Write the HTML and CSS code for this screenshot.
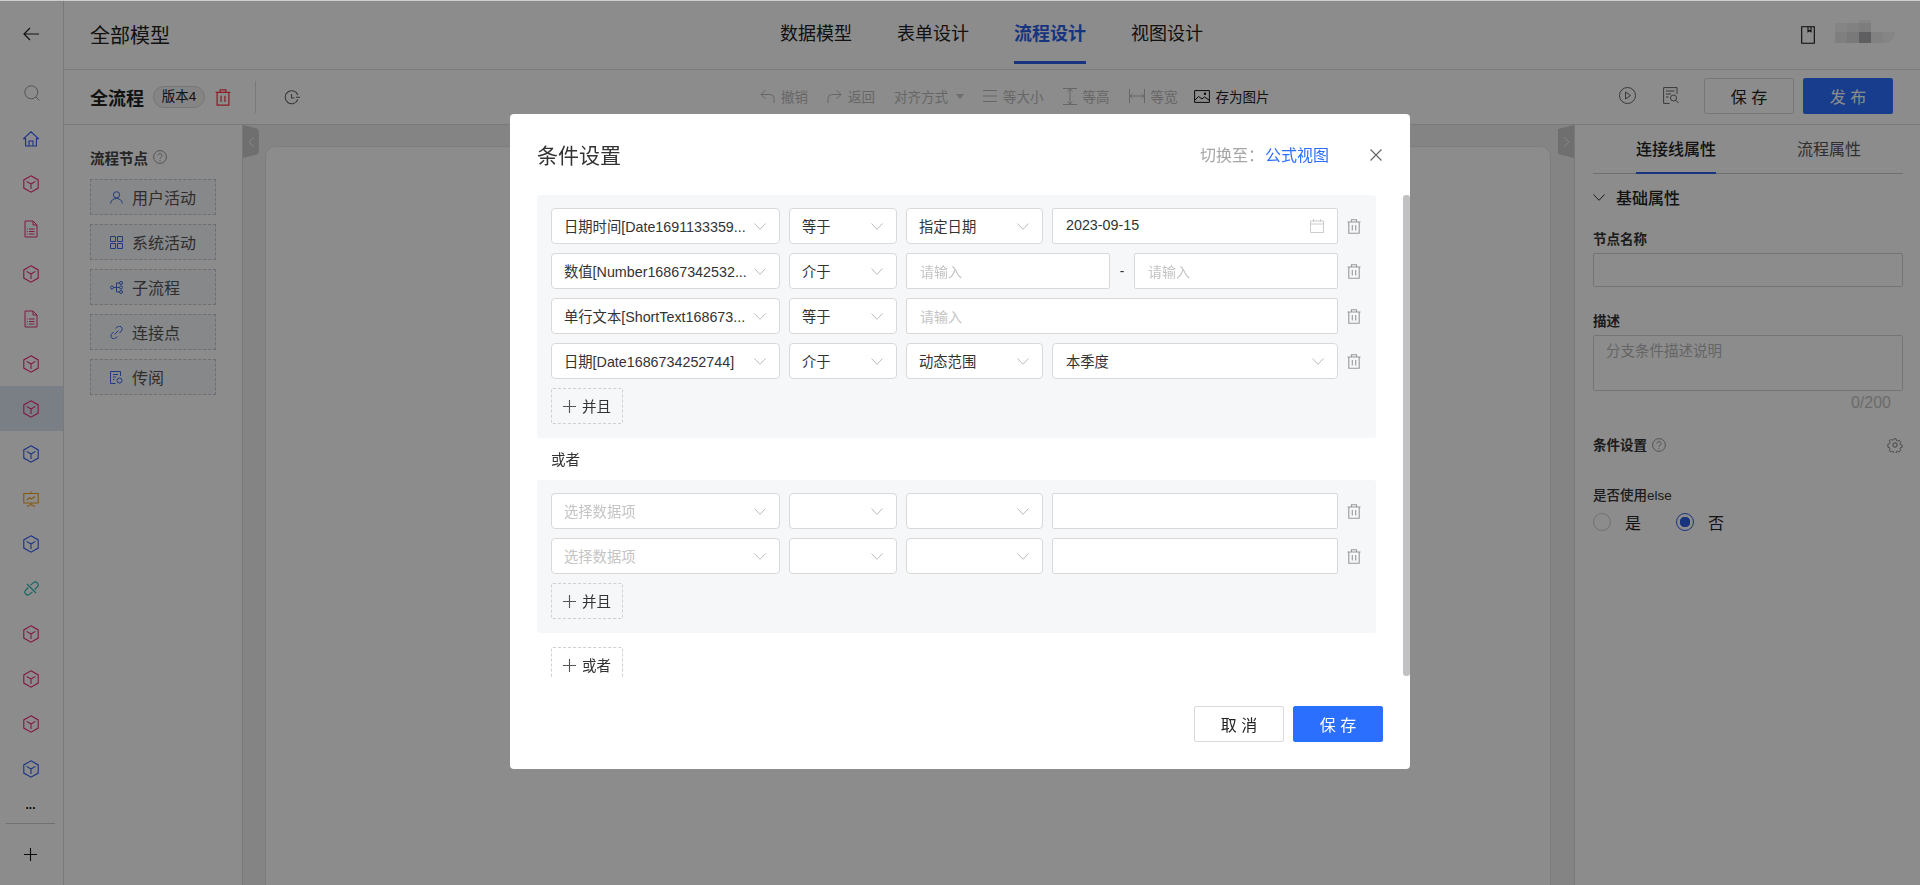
FILE: index.html
```html
<!DOCTYPE html>
<html lang="zh-CN">
<head>
    <meta charset="UTF-8">
    <meta name="viewport" content="width=device-width, initial-scale=1.0">
    <title>条件设置</title>
    <link rel="stylesheet" href="styles.css">
</head>
<body>
    <svg class="sprites" width="0" height="0">
        <symbol id="i-cube" viewBox="0 0 16 18"><path d="M8 .8l7.200 4.100v8.200L8 17.200.8 13.100V4.900z M3.600 6.400L8 9l4.400-2.600M8 9v5" fill="none" stroke="currentColor" stroke-width="1.100"/></symbol>
        <symbol id="i-doc" viewBox="0 0 14 18"><path d="M1 1h8l4 4v12H1z M9 1v4h4 M5 9h5.500M5 11.500h5.500M5 14h5.500 M2.800 9h.9M2.800 11.500h.9M2.800 14h.9" fill="none" stroke="currentColor" stroke-width="1"/></symbol>
        <symbol id="i-chevron" viewBox="0 0 12 7"><path d="M.5.500L6 6.300 11.500.500" fill="none" stroke="currentColor" stroke-width="1"/></symbol>
        <symbol id="i-trash" viewBox="0 0 14 15"><path d="M.5 3h13 M4.500 3V.8h5V3 M1.800 3v11.300h10.400V3 M5.300 6v5.500M8.700 6v5.500" fill="none" stroke="currentColor" stroke-width="1.100"/></symbol>
        <symbol id="i-plus" viewBox="0 0 14 14"><path d="M7 0v14M0 7h14" fill="none" stroke="currentColor" stroke-width="1.200"/></symbol>
        <symbol id="i-help" viewBox="0 0 14 14"><circle cx="7" cy="7" r="6.400" fill="none" stroke="currentColor"/><path d="M5 5.500a2 2 0 1 1 3.200 1.600C7.400 7.700 7 8 7 9M7 10.200v1" fill="none" stroke="currentColor"/></symbol>
    </svg>

    <div class="app">
        <aside class="rail">
            <div class="rail-back">
                <svg width="16" height="14" viewBox="0 0 16 14"><path d="M7 1L1 7l6 6M1 7h15" fill="none" stroke="#222" stroke-width="1.200"/></svg>
            </div>
            <div class="rail-search">
                <svg width="16" height="16" viewBox="0 0 16 16"><circle cx="7.300" cy="7.300" r="6.500" fill="none" stroke="#999"/><path d="M12 12l3.500 3.500" stroke="#999"/></svg>
            </div>
            <ul class="rail-list">
                <li class="blue"><svg width="16" height="16" viewBox="0 0 16 16"><path d="M.6 7.600L8 .8l7.400 6.800h-2V15H2.600V7.600z M6 15v-5h4v5" fill="none" stroke="currentColor" stroke-width="1.100"/></svg></li>
                <li class="pink"><svg width="16" height="18"><use href="#i-cube"/></svg></li>
                <li class="pink"><svg width="14" height="18"><use href="#i-doc"/></svg></li>
                <li class="pink"><svg width="16" height="18"><use href="#i-cube"/></svg></li>
                <li class="pink"><svg width="14" height="18"><use href="#i-doc"/></svg></li>
                <li class="pink"><svg width="16" height="18"><use href="#i-cube"/></svg></li>
                <li class="pink active"><svg width="16" height="18"><use href="#i-cube"/></svg></li>
                <li class="blue"><svg width="16" height="18"><use href="#i-cube"/></svg></li>
                <li class="orange"><svg width="16" height="16" viewBox="0 0 16 16"><path d="M.8 2.500h14.400v9.500H.8z M8 .5v2M8 12v2M4 15.500L8 13.500l4 2 M4 9l2.500-2.200 2 1.200L12 5.500" fill="none" stroke="currentColor" stroke-width="1.100"/></svg></li>
                <li class="blue"><svg width="16" height="18"><use href="#i-cube"/></svg></li>
                <li class="teal"><svg width="15" height="15" viewBox="0 0 15 15"><path d="M6.500 4.200L9.200 1.800a2.900 2.900 0 0 1 4.100 4.100L10.800 8.500 M8.500 10.800L5.800 13.200a2.900 2.900 0 0 1-4.100-4.100L4.200 6.500 M3 3l9 9" fill="none" stroke="currentColor" stroke-width="1.100"/></svg></li>
                <li class="pink"><svg width="16" height="18"><use href="#i-cube"/></svg></li>
                <li class="pink"><svg width="16" height="18"><use href="#i-cube"/></svg></li>
                <li class="pink"><svg width="16" height="18"><use href="#i-cube"/></svg></li>
                <li class="blue"><svg width="16" height="18"><use href="#i-cube"/></svg></li>
            </ul>
            <div class="rail-more">...</div>
            <div class="rail-add"><svg width="13" height="13"><use href="#i-plus"/></svg></div>
        </aside>

        <div class="main">
            <header class="topbar">
                <div class="topbar-title">全部模型</div>
                <nav class="topbar-tabs">
                    <a>数据模型</a>
                    <a>表单设计</a>
                    <a class="active">流程设计</a>
                    <a>视图设计</a>
                </nav>
                <div class="topbar-user">
                    <svg width="14" height="18" viewBox="0 0 14 18"><path d="M.7.700h12.600v16.600H.7z M7 .700v5l1.500-1.200L10 5.700v-5" fill="none" stroke="#111" stroke-width="1.100"/></svg>
                    <svg width="60" height="24" viewBox="0 0 60 24">
                        <rect x="0" y="3" width="12" height="9" fill="#f2f2f2"/><rect x="12" y="3" width="12" height="9" fill="#ebebeb"/><rect x="24" y="3" width="12" height="9" fill="#e3e3e3"/><rect x="24" y="0" width="12" height="3" fill="#f3f3f3"/>
                        <rect x="0" y="12" width="12" height="11" fill="#e8e8e8"/><rect x="12" y="12" width="12" height="11" fill="#dfdcdc"/><rect x="24" y="12" width="12" height="11" fill="#adaeb1"/><rect x="36" y="12" width="12" height="11" fill="#ececec"/><path d="M48 12h12c0 6-4 11-12 11z" fill="#f3f3f3"/>
                    </svg>
                </div>
            </header>

            <div class="toolbar">
                <div class="flow-name">
                    <strong>全流程</strong>
                    <span class="version">版本4</span>
                    <svg class="flow-del" width="16" height="17" viewBox="0 0 14 15"><use href="#i-trash"/></svg>
                </div>
                <div class="toolbar-history">
                    <svg width="16" height="15" viewBox="0 0 16 15"><path d="M13.800 9.500A6.500 6.500 0 1 1 13.800 5M7.500 4v4h3M12 7.300h4" fill="none" stroke="#666" stroke-width="1.100"/></svg>
                </div>
                <div class="tools">
                    <span class="tool off"><svg width="15" height="15" viewBox="0 0 15 15"><path d="M5.500 1L1 5.500 5.500 10M1 5.500h9a4 4 0 0 1 4 4V14" fill="none" stroke="currentColor"/></svg>撤销</span>
                    <span class="tool off"><svg width="15" height="15" viewBox="0 0 15 15"><path d="M9.500 1L14 5.500 9.500 10M14 5.500H5a4 4 0 0 0-4 4V14" fill="none" stroke="currentColor"/></svg>返回</span>
                    <span class="tool off tool-align">对齐方式<i class="caret"></i></span>
                    <span class="tool off"><svg width="14" height="14" viewBox="0 0 14 14"><path d="M0 1.500h14M0 7h14M0 12.500h14" stroke="currentColor"/></svg>等大小</span>
                    <span class="tool off"><svg width="14" height="17" viewBox="0 0 14 17"><path d="M0 .5h14M0 16.500h14M7 1v15M4.500 3.500L7 1l2.500 2.500M4.500 13.500L7 16l2.500-2.500" fill="none" stroke="currentColor"/></svg>等高</span>
                    <span class="tool off tool-width"><svg width="16" height="14" viewBox="0 0 16 14"><path d="M.5 0v14M15.500 0v14M1 7h14M3.500 4.500L1 7l2.500 2.500M12.500 4.500L15 7l-2.500 2.500" fill="none" stroke="currentColor"/></svg>等宽</span>
                    <span class="tool"><svg width="16" height="13" viewBox="0 0 16 13"><path d="M.6.600h14.800v11.800H.6z M1 10l3.500-3.500L8 9l2.500-2L15 10" fill="none" stroke="#111"/><circle cx="11" cy="3.800" r="1.200" fill="#111"/></svg>存为图片</span>
                </div>
                <div class="toolbar-actions">
                    <svg width="17" height="17" viewBox="0 0 17 17"><circle cx="8.500" cy="8.500" r="8" fill="none" stroke="#666"/><path d="M6.500 5v7l5-3.500z" fill="none" stroke="#666"/></svg>
                    <svg class="review" width="16" height="17" viewBox="0 0 16 17"><path d="M14 7V.6H.6v15.800h6 M3 4h8.500M3 7h5M3 10h2.500" fill="none" stroke="#666"/><circle cx="10.500" cy="11" r="3" fill="none" stroke="#666"/><path d="M12.700 13.200l2.800 2.800" stroke="#666"/></svg>
                    <button class="btn">保 存</button>
                    <button class="btn btn-primary">发 布</button>
                </div>
            </div>

            <div class="work">
                <section class="nodes">
                    <div class="nodes-title">流程节点 <svg width="14" height="14"><use href="#i-help"/></svg></div>
                    <div class="node">
                        <svg width="13" height="13" viewBox="0 0 13 13"><circle cx="6.500" cy="3.800" r="3.100" fill="none" stroke="currentColor"/><path d="M.6 12.500c.4-3.200 2.600-5 5.900-5s5.500 1.800 5.900 5" fill="none" stroke="currentColor"/></svg>
                        <span>用户活动</span>
                    </div>
                    <div class="node">
                        <svg width="13" height="13" viewBox="0 0 13 13"><path d="M.5.500h5v5h-5z M7.500.500h5v5h-5z M.5 7.500h5v5h-5z M7.500 7.500h5v5h-5z" fill="none" stroke="currentColor"/></svg>
                        <span>系统活动</span>
                    </div>
                    <div class="node">
                        <svg width="13" height="13" viewBox="0 0 13 13"><circle cx="2" cy="6.500" r="1.500" fill="none" stroke="currentColor"/><circle cx="11" cy="2" r="1.500" fill="none" stroke="currentColor"/><circle cx="11" cy="6.500" r="1.500" fill="none" stroke="currentColor"/><circle cx="11" cy="11" r="1.500" fill="none" stroke="currentColor"/><path d="M3.500 6.500h6M9.500 2H6.500v9h3" fill="none" stroke="currentColor"/></svg>
                        <span>子流程</span>
                    </div>
                    <div class="node">
                        <svg width="13" height="13" viewBox="0 0 13 13"><path d="M5.500 2.500l1.500-1.300a2.800 2.800 0 0 1 4.500 3.600l-2 2.200 M7.500 10.500L6 11.800a2.800 2.800 0 0 1-4.500-3.600l2-2.200 M4.500 8.500l4-4" fill="none" stroke="currentColor"/></svg>
                        <span>连接点</span>
                    </div>
                    <div class="node">
                        <svg width="13" height="13" viewBox="0 0 13 13"><path d="M10.500 5V.5H.5v12h5 M3 3.500h5M3 6h3M3 8.500h1.500" fill="none" stroke="currentColor"/><circle cx="9.500" cy="9.500" r="2.500" fill="none" stroke="currentColor"/></svg>
                        <span>传阅</span>
                    </div>
                </section>

                <section class="canvas-wrap">
                    <div class="handle handle-left"><svg width="7" height="12" viewBox="0 0 7 12"><path d="M6 1L1 6l5 5" fill="none" stroke="#f5f5f5"/></svg></div>
                    <div class="canvas"></div>
                    <div class="handle handle-right"><svg width="7" height="12" viewBox="0 0 7 12"><path d="M1 1l5 5-5 5" fill="none" stroke="#f5f5f5"/></svg></div>
                </section>

                <section class="props">
                    <div class="props-tabs">
                        <a class="active">连接线属性</a>
                        <a>流程属性</a>
                    </div>
                    <div class="props-head">
                        <svg class="props-chevron" width="12" height="7"><use href="#i-chevron"/></svg>
                        基础属性
                    </div>
                    <label class="props-label">节点名称</label>
                    <div class="props-input"></div>
                    <label class="props-label props-label-desc">描述</label>
                    <div class="props-area">分支条件描述说明</div>
                    <div class="props-count">0/200</div>
                    <div class="props-label props-cond">
                        <span>条件设置</span>
                        <svg width="14" height="14"><use href="#i-help"/></svg>
                        <svg class="gear" width="16" height="16" viewBox="0 0 16 16"><path d="M6.700.7h2.600l.4 2 1.500.7 1.800-1 1.800 1.900-1 1.700.6 1.500 2 .5v2.600l-2 .5-.6 1.500 1 1.700-1.800 1.900-1.800-1-1.500.7-.4 2H6.700l-.4-2-1.500-.7-1.800 1-1.800-1.900 1-1.700-.6-1.500-2-.5V7l2-.5.6-1.500-1-1.700 1.800-1.900 1.800 1 1.500-.7z" fill="none" stroke="#777" transform="translate(1.200 1.200) scale(.85)"/><circle cx="8" cy="8" r="2.200" fill="none" stroke="#777"/></svg>
                    </div>
                    <div class="props-label props-else">是否使用else</div>
                    <div class="radios">
                        <span class="radio"></span><span class="radio-text">是</span>
                        <span class="radio on"></span><span class="radio-text">否</span>
                    </div>
                </section>
            </div>
        </div>
    </div>

    <div class="overlay">
        <div class="modal">
            <div class="modal-head">
                <h2>条件设置</h2>
                <div class="modal-switch">切换至：<a>公式视图</a></div>
                <svg class="modal-close" width="12" height="12" viewBox="0 0 12 12"><path d="M.5.500l11 11M11.500.500l-11 11" stroke="#666" stroke-width="1.200"/></svg>
            </div>
            <div class="modal-body">
                <div class="group">
                    <div class="cond">
                        <div class="select"><span>日期时间[Date1691133359...</span><svg width="12" height="7"><use href="#i-chevron"/></svg></div>
                        <div class="select"><span>等于</span><svg width="12" height="7"><use href="#i-chevron"/></svg></div>
                        <div class="select"><span>指定日期</span><svg width="12" height="7"><use href="#i-chevron"/></svg></div>
                        <div class="field"><span>2023-09-15</span><svg class="cal" width="14" height="14" viewBox="0 0 14 14"><path d="M.5 2h13v11.500H.5z M.5 5h13M3.500 0v3M10.500 0v3" fill="none" stroke="#ccc"/></svg></div>
                        <svg class="del" width="14" height="15"><use href="#i-trash"/></svg>
                    </div>
                    <div class="cond">
                        <div class="select"><span>数值[Number16867342532...</span><svg width="12" height="7"><use href="#i-chevron"/></svg></div>
                        <div class="select"><span>介于</span><svg width="12" height="7"><use href="#i-chevron"/></svg></div>
                        <div class="range">
                            <div class="field hint">请输入</div>
                            <span class="range-dash">-</span>
                            <div class="field hint">请输入</div>
                        </div>
                        <svg class="del" width="14" height="15"><use href="#i-trash"/></svg>
                    </div>
                    <div class="cond">
                        <div class="select"><span>单行文本[ShortText168673...</span><svg width="12" height="7"><use href="#i-chevron"/></svg></div>
                        <div class="select"><span>等于</span><svg width="12" height="7"><use href="#i-chevron"/></svg></div>
                        <div class="field hint wide">请输入</div>
                        <svg class="del" width="14" height="15"><use href="#i-trash"/></svg>
                    </div>
                    <div class="cond">
                        <div class="select"><span>日期[Date1686734252744]</span><svg width="12" height="7"><use href="#i-chevron"/></svg></div>
                        <div class="select"><span>介于</span><svg width="12" height="7"><use href="#i-chevron"/></svg></div>
                        <div class="select"><span>动态范围</span><svg width="12" height="7"><use href="#i-chevron"/></svg></div>
                        <div class="select select-value"><span>本季度</span><svg width="12" height="7"><use href="#i-chevron"/></svg></div>
                        <svg class="del" width="14" height="15"><use href="#i-trash"/></svg>
                    </div>
                    <div class="add"><svg width="13" height="13"><use href="#i-plus"/></svg><span>并且</span></div>
                </div>

                <div class="or-label">或者</div>

                <div class="group">
                    <div class="cond">
                        <div class="select empty"><span>选择数据项</span><svg width="12" height="7"><use href="#i-chevron"/></svg></div>
                        <div class="select"><span></span><svg width="12" height="7"><use href="#i-chevron"/></svg></div>
                        <div class="select"><span></span><svg width="12" height="7"><use href="#i-chevron"/></svg></div>
                        <div class="field"></div>
                        <svg class="del" width="14" height="15"><use href="#i-trash"/></svg>
                    </div>
                    <div class="cond">
                        <div class="select empty"><span>选择数据项</span><svg width="12" height="7"><use href="#i-chevron"/></svg></div>
                        <div class="select"><span></span><svg width="12" height="7"><use href="#i-chevron"/></svg></div>
                        <div class="select"><span></span><svg width="12" height="7"><use href="#i-chevron"/></svg></div>
                        <div class="field"></div>
                        <svg class="del" width="14" height="15"><use href="#i-trash"/></svg>
                    </div>
                    <div class="add"><svg width="13" height="13"><use href="#i-plus"/></svg><span>并且</span></div>
                </div>

                <div class="add add-or"><svg width="13" height="13"><use href="#i-plus"/></svg><span>或者</span></div>
            </div>
            <div class="modal-scroll"></div>
            <div class="modal-foot">
                <button class="btn">取 消</button>
                <button class="btn btn-primary">保 存</button>
            </div>
        </div>
    </div>
</body>
</html>
```

FILE: styles.css
```css
* {
    box-sizing: border-box;
}

html, body {
    margin: 0;
    height: 100%;
    overflow: hidden;
}

body {
    font-family: "Liberation Sans", "Noto Sans CJK SC", sans-serif;
    font-size: 14px;
    color: #222;
    background-color: #fff;
}

h2 {
    margin: 0;
    font-weight: normal;
}

ul {
    margin: 0;
    padding: 0;
    list-style: none;
}

.sprites {
    position: absolute;
}

.app {
    display: flex;
    height: 885px;
}

/* left rail */
.rail {
    width: 64px;
    flex: none;
    border-right: 1px solid #ddd;
}

.rail-back {
    height: 70px;
    display: flex;
    align-items: center;
    justify-content: center;
    padding: 0 1px 2px 0;
}

.rail-search {
    height: 46px;
    display: flex;
    align-items: center;
    justify-content: center;
}

.rail-list li {
    height: 45px;
    display: flex;
    align-items: center;
    justify-content: center;
    padding-right: 1px;
}

.rail-list li.active {
    background-color: #dfe5f3;
}

.pink { color: #ea2c7a; }
.blue { color: #2f5cf0; }
.orange { color: #f2a01e; }
.teal { color: #1fb5ae; }

.rail-more {
    height: 33px;
    margin: 0 8px 0 6px;
    border-bottom: 1px solid #ccc;
    text-align: center;
    line-height: 29px;
    font-size: 12px;
    font-weight: bold;
    color: #111;
}

.rail-add {
    display: flex;
    justify-content: center;
    padding: 24px 3px 0 0;
    color: #111;
}

/* main column */
.main {
    flex: 1;
    min-width: 0;
    display: flex;
    flex-direction: column;
}

.topbar {
    height: 70px;
    flex: none;
    display: flex;
    border-bottom: 1px solid #ddd;
}

.topbar-title {
    width: 716px;
    padding: 22px 0 0 26px;
    font-size: 20px;
    line-height: 28px;
}

.topbar-tabs {
    display: flex;
    gap: 45px;
}

.topbar-tabs a {
    height: 64px;
    padding-top: 21px;
    font-size: 18px;
    line-height: 26px;
    color: #222;
}

.topbar-tabs a.active {
    font-weight: bold;
    color: #2f5fe8;
    border-bottom: 3px solid #2f5fe8;
}

.topbar-user {
    margin-left: auto;
    padding: 20px 25px 0 0;
    display: flex;
    gap: 20px;
}

.topbar-user svg:first-child {
    margin-top: 6px;
}

.toolbar {
    height: 55px;
    flex: none;
    display: flex;
    align-items: center;
    border-bottom: 1px solid #ddd;
}

.flow-name {
    width: 192px;
    height: 32px;
    padding-left: 26px;
    display: flex;
    align-items: center;
    border-right: 1px solid #ddd;
}

.flow-name strong {
    font-size: 18px;
}

.version {
    width: 52px;
    height: 22px;
    margin-left: 9px;
    border: 1px solid #d8d8d8;
    border-radius: 11px;
    background-color: #f3f3f3;
    text-align: center;
    font-size: 13.500px;
    line-height: 19px;
}

.flow-del {
    margin-left: 10px;
    color: #ff3644;
}

.toolbar-history {
    width: 504px;
    padding-left: 28px;
    display: flex;
}

.tools {
    display: flex;
    align-items: center;
    padding-bottom: 2px;
    font-size: 13.500px;
    color: #222;
}

.tool {
    display: flex;
    align-items: center;
    gap: 6px;
    margin-right: 19px;
}

.tool.off {
    color: #bbb;
}

.tool-width {
    margin-right: 16px;
}

.caret {
    margin-left: 2px;
    border: 4px solid transparent;
    border-top: 5px solid #c9c9c9;
    border-bottom: 0;
}

.toolbar-actions {
    margin-left: auto;
    padding: 0 27px 3px 0;
    display: flex;
    align-items: center;
}

.review {
    margin: 0 25px 0 27px;
}

.btn {
    width: 90px;
    height: 36px;
    border: 1px solid #d9d9d9;
    border-radius: 2px;
    background-color: #fff;
    font-family: inherit;
    font-size: 16px;
    color: #222;
    white-space: pre;
}

.btn-primary {
    margin-left: 9px;
    border-color: #2b6fff;
    background-color: #2b6fff;
    color: #fff;
}

/* workspace */
.work {
    flex: 1;
    min-height: 0;
    display: flex;
}

.nodes {
    width: 179px;
    flex: none;
    padding: 20px 26px 0;
    border-right: 1px solid #ddd;
}

.nodes-title {
    display: flex;
    align-items: center;
    gap: 5px;
    height: 24px;
    margin-bottom: 10px;
    font-weight: bold;
    font-size: 14.500px;
    color: #444;
}

.nodes-title svg {
    color: #999;
}

.node {
    width: 126px;
    height: 36px;
    margin-bottom: 9px;
    padding-left: 19px;
    display: flex;
    align-items: center;
    gap: 9px;
    border: 1px dashed #c7c9cf;
    background-color: #f6f7fb;
    font-size: 16px;
    color: #555;
}

.node svg {
    color: #3d6ae8;
}

.canvas-wrap {
    flex: 1;
    position: relative;
    padding: 21px 23px 0 22px;
    background-color: #f1f1f1;
}

.canvas {
    height: 100%;
    border: 1px solid #e6e6e6;
    border-bottom: 0;
    border-radius: 10px 10px 0 0;
    background-color: #fff;
}

.handle {
    position: absolute;
    top: 0;
    width: 16px;
    height: 33px;
    display: flex;
    align-items: center;
    justify-content: center;
    background-color: #cbcbcb;
}

.handle-left {
    left: 0;
    border-radius: 0 8px 8px 0;
    clip-path: polygon(0 0, 100% 12%, 100% 88%, 0 100%);
}

.handle-right {
    right: 0;
    clip-path: polygon(0 12%, 100% 0, 100% 100%, 0 88%);
}

.props {
    width: 346px;
    flex: none;
    padding: 0 17px 0 18px;
    border-left: 1px solid #ddd;
}

.props-tabs {
    height: 49px;
    padding-left: 43px;
    display: flex;
    gap: 81px;
    border-bottom: 1px solid #ccc;
    font-size: 16px;
    line-height: 49px;
    color: #555;
}

.props-tabs a.active {
    height: 49px;
    color: #222;
    font-weight: 500;
    border-bottom: 2px solid #2f5fe8;
}

.props-head {
    height: 46px;
    display: flex;
    align-items: center;
    font-size: 16px;
    font-weight: 500;
    color: #222;
}

.props-chevron {
    margin-right: 11px;
    color: #333;
}

.props-label {
    display: block;
    height: 20px;
    margin-top: 8px;
    line-height: 24px;
    font-weight: bold;
    font-size: 13.500px;
    color: #333;
}

.props-input {
    height: 34px;
    margin-top: 5px;
    border: 1px solid #d6d6d6;
    border-radius: 2px;
}

.props-label-desc {
    margin-top: 23px;
}

.props-area {
    height: 56px;
    margin-top: 5px;
    padding: 4px 12px;
    border: 1px solid #d6d6d6;
    border-radius: 2px;
    font-size: 14.500px;
    line-height: 22px;
    color: #b8b8b8;
}

.props-count {
    height: 22px;
    padding-right: 12px;
    text-align: right;
    line-height: 24px;
    font-size: 16px;
    color: #c4c4c4;
}

.props-cond {
    display: flex;
    align-items: center;
    gap: 5px;
    margin-top: 22px;
}

.props-cond span {
    margin-top: 2px;
}

.props-cond svg {
    color: #999;
}

.gear {
    margin-left: auto;
}

.props-else {
    margin-top: 29px;
    font-weight: 500;
}

.radios {
    display: flex;
    align-items: center;
    margin-top: 6px;
    font-size: 16px;
}

.radio {
    width: 18px;
    height: 18px;
    border: 1px solid #ccc;
    border-radius: 50%;
}

.radio.on {
    border-color: #2f5fe8;
    background: radial-gradient(circle, #2f5fe8 0 5px, #fff 5.500px);
}

.radio-text {
    width: 65px;
    padding-left: 14px;
    color: #222;
}

/* dialog */
.overlay {
    position: fixed;
    inset: 0;
    border-top: 1px solid #ccc;
    padding-top: 113px;
    display: flex;
    justify-content: center;
    align-items: flex-start;
    background-color: rgba(0, 0, 0, 0.45);
}

.modal {
    position: relative;
    width: 900px;
    height: 655px;
    border-radius: 4px;
    background-color: #fff;
}

.modal-head {
    height: 81px;
    padding: 0 28px 0 27px;
    display: flex;
    align-items: center;
}

.modal-head h2 {
    margin-bottom: 2px;
    font-size: 21px;
    color: #333;
}

.modal-switch {
    margin-left: auto;
    margin-bottom: 2px;
    font-size: 16px;
    color: #a6a6a6;
}

.modal-switch a {
    margin-left: 1px;
    color: #2b6fff;
}

.modal-close {
    margin: 0 0 0 41px;
}

.modal-body {
    height: 483px;
    padding: 0 34px 0 27px;
    overflow: hidden;
}

.group {
    padding: 13px 14px 14px;
    border-radius: 3px;
    background-color: #f6f7f9;
}

.cond {
    display: grid;
    grid-template-columns: 229px 108px 137px 286px 14px;
    column-gap: 9px;
    align-items: center;
    margin-bottom: 9px;
}

.select,
.field {
    height: 36px;
    padding: 0 13px;
    display: flex;
    align-items: center;
    justify-content: space-between;
    border: 1px solid #d9d9d9;
    background-color: #fff;
    font-size: 14.300px;
    color: #333;
}

.select span,
.field span {
    margin-bottom: 2px;
    white-space: nowrap;
}

.select {
    padding-left: 12px;
    border-radius: 4px;
}

.select-value {
    padding-left: 13px;
}

.field {
    border-radius: 2px;
}

.select svg {
    flex: none;
    color: #bbb;
}

.select.empty,
.field.hint {
    color: #c4c4c4;
}

.field.hint {
    padding-bottom: 1px;
    font-size: 14px;
}

.cal {
    flex: none;
}

.wide {
    grid-column: span 2;
}

.range {
    grid-column: span 2;
    display: grid;
    grid-template-columns: 204px 24px 204px;
    align-items: center;
}

.range-dash {
    text-align: center;
    color: #333;
}

.del {
    color: #999;
}

.add {
    width: 72px;
    height: 36px;
    padding-left: 11px;
    display: flex;
    align-items: center;
    gap: 6px;
    border: 1px dashed #d0d0d0;
    border-radius: 2px;
    font-size: 14.500px;
    color: #333;
}

.add span {
    margin-bottom: 2px;
}

.add svg {
    color: #555;
}

.or-label {
    height: 42px;
    padding-left: 14px;
    line-height: 44px;
    font-size: 14.500px;
    color: #333;
}

.add-or {
    margin: 14px 0 0 14px;
}

.modal-scroll {
    position: absolute;
    top: 81px;
    right: 0;
    width: 7px;
    height: 481px;
    border-radius: 3px;
    background-color: #c1c1c3;
}

.modal-foot {
    padding: 28px 27px 0 0;
    display: flex;
    justify-content: flex-end;
}
```
